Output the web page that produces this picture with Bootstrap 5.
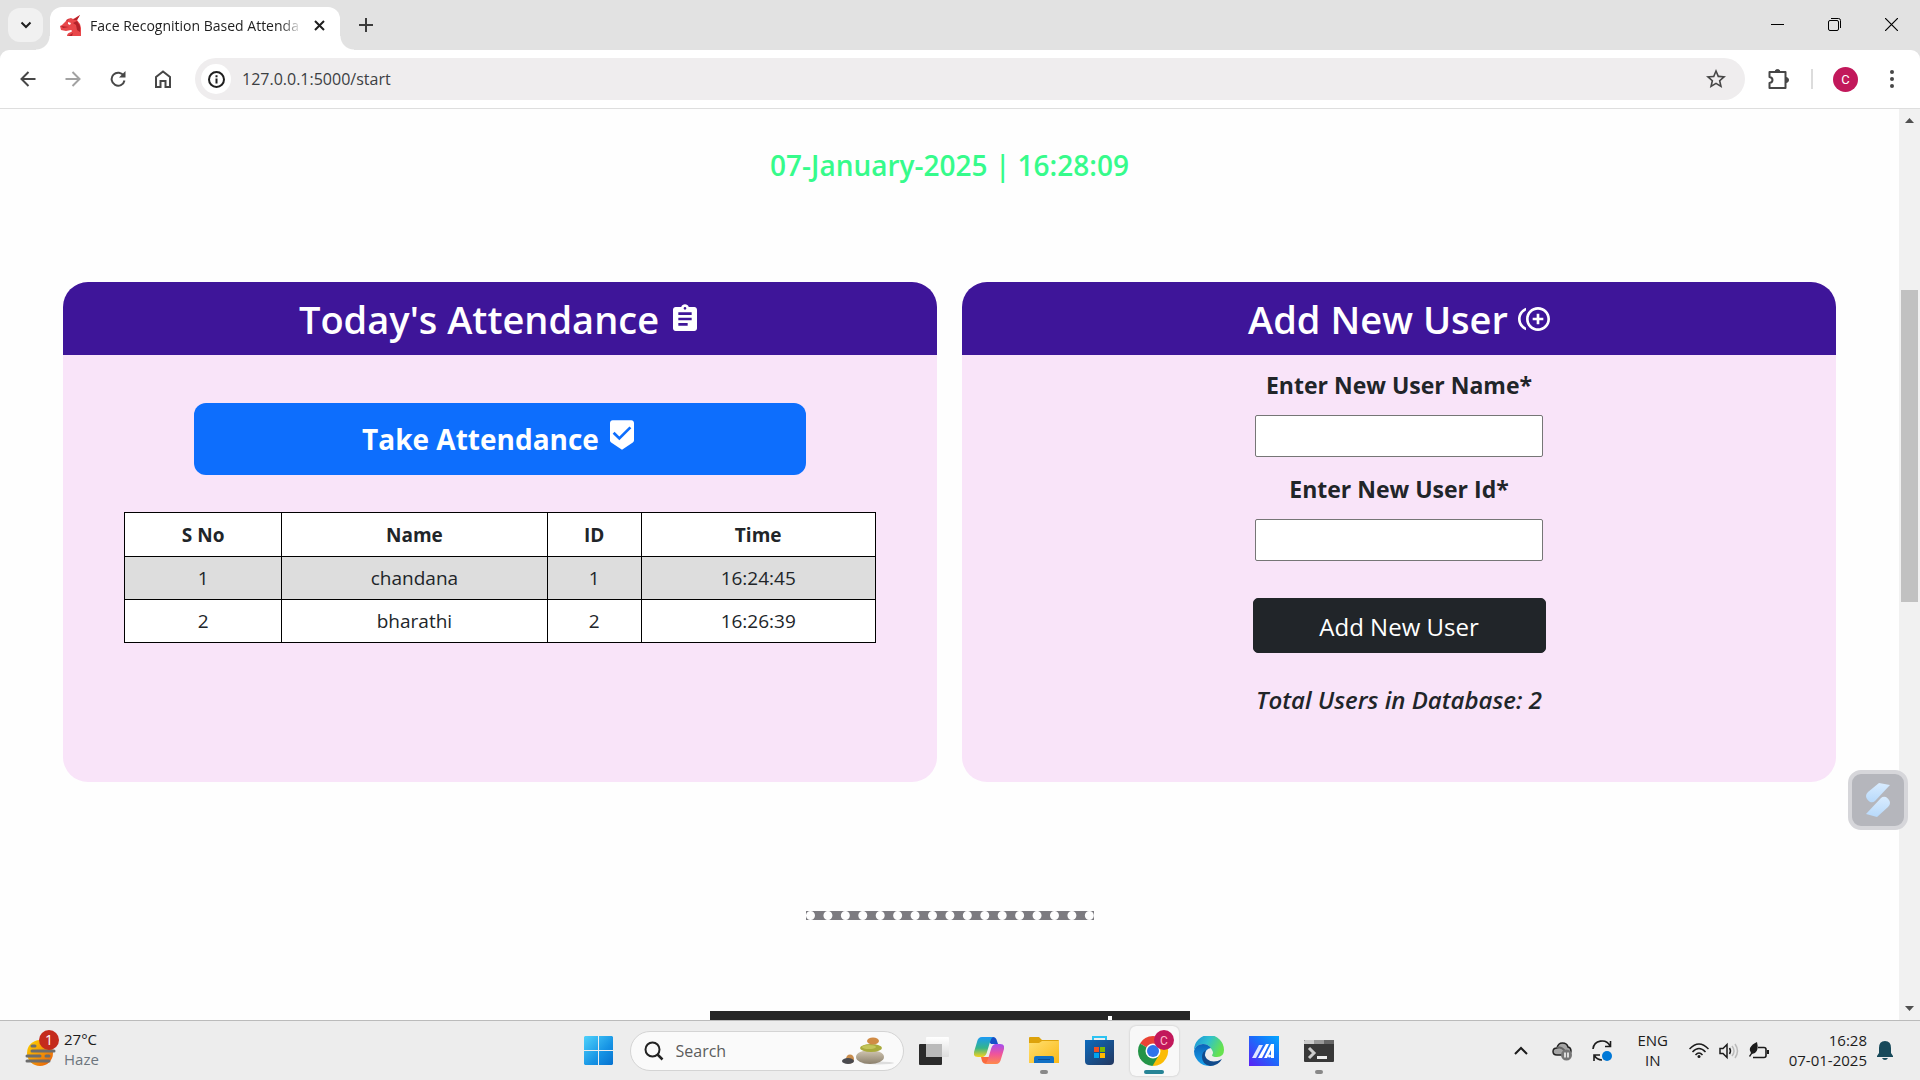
<!DOCTYPE html>
<html lang="en">
<head>
<meta charset="utf-8">
<meta name="viewport" content="width=device-width, initial-scale=1">
<title>Face Recognition Based Attendance System</title>
<link rel="stylesheet" href="https://cdn.jsdelivr.net/npm/bootstrap@5.3.0/dist/css/bootstrap.min.css">
<style>
  body { font-family: "Open Sans", "Noto Sans", sans-serif; color: #212529; }
  button { padding: 0; border: 0; background: none; color: inherit; }
  svg { display: block; flex: none; }

  /* browser frame */
  .tab-strip { height: 50px; background: #e2e2e2; }
  .tab-search { width: 35px; height: 34px; margin: 8px 7px 8px 8px; border-radius: 12px; background: #f1f1f1; }
  .browser-tab { position: relative; width: 290px; height: 43px; padding: 0 15px 6px 10px; background: #fff; border-radius: 12px 12px 0 0; }
  .browser-tab::before, .browser-tab::after { content: ""; position: absolute; bottom: 0; width: 14px; height: 14px; }
  .browser-tab::before { left: -14px; background: radial-gradient(circle at 0 0, transparent 13px, #fff 14px); }
  .browser-tab::after { right: -14px; background: radial-gradient(circle at 100% 0, transparent 13px, #fff 14px); }
  .tab-title { width: 212px; margin-left: 9px; font-size: 14px; color: #1f1f1f; -webkit-mask-image: linear-gradient(90deg, #000 90%, transparent); mask-image: linear-gradient(90deg, #000 90%, transparent); }
  .new-tab { width: 51px; height: 50px; }
  .window-key { width: 57px; height: 48px; }
  .strip-base { background: #e2e2e2; }
  .toolbar { height: 59px; border-bottom: 1px solid #dedede; border-radius: 9px 9px 0 0; background: #fff; padding: 8px 10px 8px 5px; }
  .tool-key { width: 45px; height: 42px; color: #474747; }
  .address { height: 42px; border-radius: 21px; background: #efedee; padding: 0 18px 0 6px; margin-left: 10px; }
  .site-info { width: 30px; height: 30px; border-radius: 50%; background: #fff; color: #1f1f1f; }
  .address input { border: 0; background: none; outline: 0; padding: 0; margin-left: 11px; font-size: 16px; color: #3c4043; }
  .puzzle { margin: 0 22px 0 23px; }
  .tool-rule { width: 2px; height: 20px; background: #dcdcdc; }
  .avatar { width: 25px; height: 25px; margin: 0 32px 0 20px; border-radius: 50%; background: #c2185b; color: #fff; font: 13px Roboto, sans-serif; }
  .more { margin-right: 16px; }

  /* attendance page */
  .page-area { background: #fefefe; }
  .clock-line { font-size: 28px; line-height: 34px; font-weight: 600; color: #36fb8b; padding-top: 39px; margin: 0 0 100px; }
  .panels { display: flex; gap: 25px; padding: 0 63px; }
  .panel { flex: 1 1 0; min-height: 500px; border-radius: 25px; background: #f9e4f9; overflow: hidden; }
  .panel-title { height: 73px; gap: 10px; margin: 0; padding-top: 3px; background: #3e1599; color: #fff; font-size: 38px; font-weight: 600; }
  .panel-title svg { margin-bottom: 2px; }
  .take-btn { width: 70%; height: 72px; gap: 7px; margin-top: 48px; border-radius: 12px; font-size: 28px; font-weight: 700; }
  .take-btn svg { margin-bottom: 8px; }
  .log { width: 86%; margin: 37px auto 0; border-collapse: collapse; table-layout: fixed; background: #fff; font-size: 19px; line-height: 26px; }
  .log th, .log td { border: 1px solid #000; padding: 9px 8px 8px; text-align: center; }
  .log th { font-weight: 700; }
  .log td { line-height: 25px; }
  .log tbody tr:nth-child(odd) { background: #ddd; }
  .user-form { padding-top: 12px; }
  .user-form label { font-size: 23px; line-height: 36px; font-weight: 700; margin-bottom: 12px; }
  .user-form input { width: 288px; height: 42px; border: 1px solid #767676; border-radius: 2px; margin-bottom: 14px; background: #fff; }
  .add-btn { width: 293px; height: 55px; margin-top: 23px; padding-top: 8px; border-radius: 5px; font-size: 24px; }
  .total { font-size: 24px; line-height: 36px; font-weight: 600; font-style: italic; margin: 29px 0 0; }
  .beads { width: 288px; height: 9px; margin: 129px auto 91px; border: 0; border-top: 9px dotted #fefefe; background: #7c7b80; opacity: 1; }
  .footer-block { width: 480px; height: 60px; background: #262626; padding: 5px 78px; }
  .footer-block i { width: 4px; height: 40px; background: #fff; }
  .scroll-rail { width: 21px; background: #f1f1f1; padding: 7px 2px 4px; }
  .scroll-rail .thumb { height: 312px; background: #c1c1c1; margin-top: 164px; }
  .helper { position: fixed; right: 12px; bottom: 250px; width: 60px; height: 60px; border: 4px solid #d6d6da; border-radius: 13px; background: #b5b6bc; }

  /* taskbar */
  .taskbar { height: 60px; background: #ededed; border-top: 1px solid #bbb; font-size: 15px; line-height: 20px; color: #1c1c1c; }
  .side { flex: 1 1 0; }
  .weather { padding-left: 24px; gap: 3px; padding-bottom: 4px; }
  .task-key { position: relative; width: 55px; height: 59px; }
  .task-key .plate { width: 49px; height: 50px; border-radius: 6px; background: #f8f8f8; box-shadow: 0 0 2px #bbb; }
  .task-key.open::after { content: ""; position: absolute; left: 50%; bottom: 6px; width: 8px; height: 4px; margin-left: -4px; border-radius: 2px; background: #888; }
  .task-key.live::after { width: 20px; margin-left: -10px; background: #268496; }
  .seek { width: 274px; height: 40px; margin: 0 3px 0 4px; border: 1px solid #d4d4d4; border-radius: 20px; background: #fafafa; padding: 0 9px 0 13px; }
  .seek input { min-width: 0; border: 0; outline: 0; background: none; padding: 0; margin-left: 12px; font-size: 16px; color: #555; }
  .seek input::placeholder { color: #5c5c5c; opacity: 1; }
  .tray { padding-right: 27px; }
  .tray .words { padding-bottom: 2px; }
  .tray .lang { margin: 0 21px 0 5px; }
  .tray .date { width: 80px; margin: 0 10px 0 18px; }
</style>
</head>
<body class="vh-100 d-flex flex-column overflow-hidden">

<header>
  <div class="tab-strip d-flex align-items-end">
    <button class="tab-search d-flex align-items-center justify-content-center" aria-label="Search tabs">
      <svg width="12" height="8" viewBox="0 0 12 8" fill="none" stroke="#1f1f1f" stroke-width="2"><path d="M1.500 1.500L6 6l4.500-4.500"/></svg>
    </button>
    <div class="browser-tab d-flex align-items-center">
      <svg width="21" height="21" viewBox="0 0 21 21"><path fill="#e8474a" d="M0 11l2-1 4-4q2-3 5-3l2 1 2-1 5-3-3 5 3 4 1 4v8H7q0-3 4-4 2-1 0-2l-5 1-5-1z"/><path fill="#b3222a" d="M13 5l7-5-3 5zM1 11l8 1-6 1zM13 8l3 2 1 5 3 2v-6l-3-5zM8 21l5-3-1 3zM6 5l3-1-2 2z"/><path fill="#fff" d="M8 7l3 1-1 2-2-1z"/></svg>
      <span class="tab-title text-nowrap">Face Recognition Based Attenda</span>
      <button class="ms-auto" aria-label="Close tab"><svg width="11" height="11" viewBox="0 0 11 11" stroke="#1f1f1f" stroke-width="2"><path d="M1 1l9 9M10 1l-9 9"/></svg></button>
    </div>
    <button class="new-tab d-flex align-items-center justify-content-center" aria-label="New tab">
      <svg width="14" height="14" viewBox="0 0 14 14" stroke="#3c3c3c" stroke-width="2"><path d="M7 0v14M0 7h14"/></svg>
    </button>
    <div class="ms-auto d-flex align-self-start">
      <button class="window-key d-flex align-items-center justify-content-center" aria-label="Minimize"><svg width="13" height="13" viewBox="0 0 13 13" stroke="#000"><path d="M0 6.500h13"/></svg></button>
      <button class="window-key d-flex align-items-center justify-content-center" aria-label="Restore"><svg width="13" height="13" viewBox="0 0 13 13" stroke="#000" fill="none"><rect x=".5" y="2.500" width="10" height="10" rx="1.500"/><path d="M3 .5h7.500q2 0 2 2V10"/></svg></button>
      <button class="window-key d-flex align-items-center justify-content-center" aria-label="Close"><svg width="13" height="13" viewBox="0 0 13 13" stroke="#000" stroke-width="1.200"><path d="M0 0l13 13M13 0L0 13"/></svg></button>
    </div>
  </div>
  <div class="strip-base">
  <div class="toolbar d-flex align-items-center">
    <button class="tool-key d-flex align-items-center justify-content-center" aria-label="Back"><svg width="16" height="16" viewBox="0 0 16 16" fill="none" stroke="currentColor" stroke-width="2"><path d="M15.500 8H2M8.500 1L1.500 8l7 7"/></svg></button>
    <button class="tool-key d-flex align-items-center justify-content-center opacity-50" aria-label="Forward"><svg width="16" height="16" viewBox="0 0 16 16" fill="none" stroke="currentColor" stroke-width="2"><path d="M.5 8H14M7.500 1l7 7-7 7"/></svg></button>
    <button class="tool-key d-flex align-items-center justify-content-center" aria-label="Reload"><svg width="16" height="16" viewBox="0 0 16 16"><path d="M13.800 5A6.500 6.500 0 1 0 14.500 9.500" fill="none" stroke="currentColor" stroke-width="2"/><path d="M15.500 0v6.500H9z" fill="currentColor"/></svg></button>
    <button class="tool-key d-flex align-items-center justify-content-center" aria-label="Home"><svg width="16" height="18" viewBox="0 0 16 18" fill="none" stroke="currentColor" stroke-width="2"><path d="M1 7l7-5.500L15 7v10h-4.500v-6h-5v6H1z"/></svg></button>
    <div class="address d-flex align-items-center flex-grow-1">
      <button class="site-info d-flex align-items-center justify-content-center" aria-label="Site information"><svg width="17" height="17" viewBox="0 0 17 17" fill="none" stroke="currentColor" stroke-width="2"><circle cx="8.500" cy="8.500" r="7.500"/><path d="M8.500 7.500v5M8.500 4.300v2"/></svg></button>
      <input class="flex-grow-1" type="text" value="127.0.0.1:5000/start" aria-label="Address">
      <button aria-label="Bookmark this page"><svg width="22" height="22" viewBox="1 1 22 22" fill="#474747"><path d="M22 9.240l-7.190-.62L12 2 9.190 8.630 2 9.240l5.460 4.730L5.820 21 12 17.270 18.180 21l-1.630-7.030L22 9.240zM12 15.400l-3.760 2.270 1-4.280-3.320-2.880 4.380-.38L12 6.100l1.710 4.040 4.380.38-3.320 2.880 1 4.280L12 15.400z"/></svg></button>
    </div>
    <button class="puzzle" aria-label="Extensions"><svg width="21" height="20" viewBox="0 0 21 20"><path d="M1.500 3h16v16h-16v-5q3-.5 3-3t-3-3z" fill="none" stroke="#474747" stroke-width="2" stroke-linejoin="round"/><path d="M7 3a2.500 2.500 0 0 1 5 0zM18 8.500a2.500 2.500 0 0 1 0 5z" fill="#474747" stroke="#474747"/></svg></button>
    <span class="tool-rule"></span>
    <button class="avatar d-flex align-items-center justify-content-center" aria-label="Profile">C</button>
    <button class="more" aria-label="Menu"><svg width="4" height="18" viewBox="0 0 4 18" fill="#474747"><circle cx="2" cy="2" r="2"/><circle cx="2" cy="9" r="2"/><circle cx="2" cy="16" r="2"/></svg></button>
  </div>
  </div>
</header>

<div class="d-flex flex-grow-1 overflow-hidden page-area">
  <main class="flex-grow-1 text-center overflow-hidden">
    <h3 class="clock-line">07-January-2025 | 16:28:09</h3>

    <div class="panels">
      <section class="panel">
        <h2 class="panel-title d-flex align-items-center justify-content-center">Today's Attendance
          <svg width="32" height="32" viewBox="0 0 24 24" fill="#fff"><path d="M19 3h-4.180C14.400 1.840 13.300 1 12 1c-1.300 0-2.400.84-2.820 2H5c-1.100 0-2 .9-2 2v14c0 1.100.9 2 2 2h14c1.100 0 2-.9 2-2V5c0-1.100-.9-2-2-2zm-7 0c.55 0 1 .45 1 1s-.45 1-1 1-1-.45-1-1 .45-1 1-1zm2 14H7v-2h7v2zm3-4H7v-2h10v2zm0-4H7V7h10v2z"/></svg>
        </h2>
        <button class="take-btn btn btn-primary d-inline-flex align-items-center justify-content-center border-0">Take Attendance
          <svg width="32" height="32" viewBox="0 0 24 24" fill="#fff"><path d="M19 1H5c-1.100 0-1.990.9-1.990 2L3 15.930c0 .69.35 1.300.88 1.660L12 23l8.110-5.410c.53-.36.88-.97.88-1.660L21 3c0-1.100-.9-2-2-2zm-9 15l-5-5 1.410-1.410L10 13.170l7.590-7.590L19 7l-9 9z"/></svg>
        </button>
        <table class="log">
          <colgroup><col style="width:20.900%"><col style="width:35.400%"><col style="width:12.500%"><col style="width:31.200%"></colgroup>
          <thead><tr><th>S No</th><th>Name</th><th>ID</th><th>Time</th></tr></thead>
          <tbody>
            <tr><td>1</td><td>chandana</td><td>1</td><td>16:24:45</td></tr>
            <tr><td>2</td><td>bharathi</td><td>2</td><td>16:26:39</td></tr>
          </tbody>
        </table>
      </section>

      <section class="panel">
        <h2 class="panel-title d-flex align-items-center justify-content-center">Add New User
          <svg width="32" height="32" viewBox="0 0 24 24" fill="#fff"><path d="M16 8h-2v3h-3v2h3v3h2v-3h3v-2h-3zM2 12c0-2.790 1.640-5.200 4.010-6.320V3.520C2.520 4.760 0 8.090 0 12s2.520 7.240 6.010 8.480v-2.160C3.640 17.200 2 14.790 2 12zm13-9c-4.960 0-9 4.040-9 9s4.040 9 9 9 9-4.040 9-9-4.040-9-9-9zm0 16c-3.860 0-7-3.140-7-7s3.140-7 7-7 7 3.140 7 7-3.140 7-7 7z"/></svg>
        </h2>
        <form class="user-form d-flex flex-column align-items-center">
          <label for="newusername">Enter New User Name*</label>
          <input type="text" id="newusername">
          <label for="newuserid">Enter New User Id*</label>
          <input type="text" id="newuserid">
          <button type="button" class="add-btn btn btn-dark">Add New User</button>
          <h5 class="total">Total Users in Database: 2</h5>
        </form>
      </section>
    </div>

    <hr class="beads">
    <div class="footer-block mx-auto d-flex justify-content-end"><i></i></div>
  </main>

  <div class="scroll-rail d-flex flex-column">
    <svg width="17" height="10" viewBox="0 0 17 10" fill="#505050"><path d="M4 7l4.500-5L13 7z"/></svg>
    <div class="thumb"></div>
    <svg class="mt-auto" width="17" height="12" viewBox="0 0 17 12" fill="#505050"><path d="M4 2h9L8.500 7z"/></svg>
  </div>
</div>

<button class="helper d-flex align-items-center justify-content-center" aria-label="Open assistant">
  <svg width="26" height="34" viewBox="0 0 26 34"><defs><linearGradient id="ribbon" x1="0" y1="0" x2="0" y2="1"><stop offset="0" stop-color="#d9ecff"/><stop offset="1" stop-color="#b7d9fb"/></linearGradient></defs><path fill="url(#ribbon)" d="M14 0l11 2L10 18q-2 2-5 1-4-3-4-6 0-2 2-4z"/><path fill="url(#ribbon)" d="M12 34L1 31l15-16q2-2 5-1 4 3 4 6 0 2-2 4z"/></svg>
</button>

<footer class="taskbar d-flex align-items-center">
  <div class="side weather d-flex align-items-center">
    <svg width="37" height="40" viewBox="0 0 37 40">
      <defs><linearGradient id="sun" x1="0" y1="0" x2="1" y2="1"><stop offset="0" stop-color="#ffd500"/><stop offset="1" stop-color="#e8590c"/></linearGradient></defs>
      <circle cx="16" cy="24" r="13" fill="url(#sun)"/>
      <path d="M8 17h3M8 22h22M3 27h13M22 27h3M3 32h22" stroke="#6d6d6d" stroke-width="3" stroke-linecap="round"/>
      <circle cx="25" cy="11" r="10" fill="#c42b1c"/><text x="25" y="16" font-size="14" text-anchor="middle" fill="#fff">1</text>
    </svg>
    <div><div>27°C</div><div class="text-secondary">Haze</div></div>
  </div>

  <button class="task-key d-flex align-items-center justify-content-center" aria-label="Start">
    <svg width="29" height="29" viewBox="0 0 29 29"><defs><linearGradient id="win" x1="0" y1="0" x2="1" y2="1"><stop offset="0" stop-color="#4fd2fb"/><stop offset=".6" stop-color="#1693e4"/><stop offset="1" stop-color="#0671cf"/></linearGradient></defs><path fill="url(#win)" d="M1 0h13v14H0V1zM15 0h13l1 1v13H15zM0 15h14v14H1l-1-1zM15 15h14v13l-1 1H15z"/></svg>
  </button>
  <div class="seek d-flex align-items-center">
    <svg width="20" height="20" viewBox="0 0 20 20" fill="none" stroke="#222" stroke-width="2"><circle cx="8.500" cy="8.500" r="7"/><path d="M13.500 13.500l5 5" stroke-width="2.500"/></svg>
    <input class="flex-grow-1" type="text" placeholder="Search" aria-label="Search">
    <svg width="52" height="28" viewBox="0 0 52 28">
      <defs><linearGradient id="stone" x1="0" y1="0" x2="0" y2="1"><stop offset="0" stop-color="#d3c8b4"/><stop offset="1" stop-color="#8b806c"/></linearGradient></defs>
      <ellipse cx="36" cy="26" rx="16" ry="1.500" fill="#ddd"/>
      <ellipse cx="8" cy="22" rx="4" ry="4.500" fill="#c98d4d"/><ellipse cx="6" cy="24" rx="6" ry="3" fill="#4a4a4e"/>
      <ellipse cx="28" cy="20" rx="14" ry="7" fill="url(#stone)"/><ellipse cx="29" cy="11" rx="11" ry="4" fill="#a9ab3c"/><ellipse cx="27" cy="10" rx="7" ry="2" fill="#c3c55a"/><ellipse cx="31" cy="4" rx="6" ry="3.500" fill="#d08b45"/>
    </svg>
  </div>
  <button class="task-key d-flex align-items-center justify-content-center" aria-label="Task view">
    <svg width="30" height="28" viewBox="0 0 30 28"><defs><linearGradient id="pane" x1="0" y1="0" x2="0" y2="1"><stop offset="0" stop-color="#fff"/><stop offset="1" stop-color="#ddd"/></linearGradient></defs><rect y="7" width="23" height="21" rx="1" fill="#2b2b2b"/><rect x="7" width="23" height="20" rx="1" fill="url(#pane)"/><rect x="7" y="7" width="16" height="13" fill="#bababa"/></svg>
  </button>
  <button class="task-key d-flex align-items-center justify-content-center" aria-label="Copilot">
    <svg width="30" height="28" viewBox="0 0 30 28">
      <defs><linearGradient id="cpa" x1="0" y1="0" x2="0" y2="1"><stop offset="0" stop-color="#1b9af5"/><stop offset=".55" stop-color="#35b58a"/><stop offset="1" stop-color="#f8d21c"/></linearGradient><linearGradient id="cpb" x1="0" y1="0" x2="0" y2="1"><stop offset="0" stop-color="#a34df0"/><stop offset=".5" stop-color="#f0549b"/><stop offset="1" stop-color="#ff8a4a"/></linearGradient></defs>
      <path fill="#1450c8" d="M11 0h8q3 0 4 4l1 3h-7z"/>
      <path fill="#fa6a3d" d="M7 20h10l-4 7q-4 0-5-3z"/>
      <path fill="url(#cpa)" d="M8 0h11q-2 1-3 5l-3 10q-1 4-4 5H4q-5 0-4-5L3 5q1-5 5-5z"/>
      <path fill="url(#cpb)" d="M22 27H11q2-1 3-5l3-10q1-4 4-5h5q5 0 4 5l-3 10q-1 5-5 5z"/>
    </svg>
  </button>
  <button class="task-key open d-flex align-items-center justify-content-center" aria-label="File Explorer">
    <svg width="30" height="27" viewBox="0 0 30 27"><defs><linearGradient id="fold" x1="0" y1="0" x2="1" y2="1"><stop offset="0" stop-color="#ffdf70"/><stop offset="1" stop-color="#fbb917"/></linearGradient></defs><path fill="#dda20b" d="M0 1q0-1 1-1h9l3 3h16q1 0 1 1v4H0z"/><path fill="url(#fold)" d="M0 6h10l3-2h17v22H0z"/><path fill="#1270c4" d="M5 26v-5q0-2 2-2h16q2 0 2 2v5z"/><path stroke="#0c4f94" d="M9 22.500h12"/></svg>
  </button>
  <button class="task-key d-flex align-items-center justify-content-center" aria-label="Microsoft Store">
    <svg width="29" height="29" viewBox="0 0 29 29"><defs><linearGradient id="bag" x1="0" y1="0" x2="1" y2="1"><stop offset="0" stop-color="#0d6bbd"/><stop offset="1" stop-color="#23375f"/></linearGradient></defs><path d="M8 6V1h13v5" fill="none" stroke="#2cc3f2" stroke-width="2"/><path fill="url(#bag)" d="M0 4h29v21q0 4-4 4H4q-4 0-4-4z"/><path fill="#f25022" d="M9 11h5v5H9z"/><path fill="#7fba00" d="M15 11h5v5h-5z"/><path fill="#00a4ef" d="M9 17h5v5H9z"/><path fill="#ffb900" d="M15 17h5v5h-5z"/></svg>
  </button>
  <button class="task-key open live d-flex align-items-center justify-content-center" aria-label="Chrome">
    <span class="plate d-flex align-items-center justify-content-center">
    <svg width="40" height="44" viewBox="-1 0 40 44">
      <path fill="#ea4335" d="M18 22L5 14.500A15 15 0 0 1 31 14.500z"/><path fill="#fbbc05" d="M18 22V15l13-.5A15 15 0 0 1 18 37z"/>
      <path fill="#249447" d="M18 22l6 4-6.500 11A15 15 0 0 1 5 14.500z"/>
      <circle cx="18" cy="22" r="7.500" fill="#fff"/><circle cx="18" cy="22" r="6" fill="#2f73ea"/>
      <circle cx="29" cy="11" r="10" fill="#c2185b"/><text x="29" y="15.500" text-anchor="middle" font-family="Roboto, sans-serif" font-size="12" fill="#fbc">C</text>
    </svg></span>
  </button>
  <button class="task-key d-flex align-items-center justify-content-center" aria-label="Edge">
    <svg width="30" height="30" viewBox="0 0 30 30">
      <defs><linearGradient id="ea" x1="0" y1="0" x2="1" y2=".4"><stop offset="0" stop-color="#1a8fd8"/><stop offset=".5" stop-color="#2fc0cf"/><stop offset="1" stop-color="#66e24f"/></linearGradient><linearGradient id="eb" x1="0" y1="0" x2="0" y2="1"><stop offset="0" stop-color="#0a63b8"/><stop offset="1" stop-color="#1aa3ee"/></linearGradient></defs>
      <path fill="url(#ea)" d="M0 14A15 15 0 0 1 30 14q0 7-7 7-5 0-5-2 2-2 0-5-3-6-9-6Q3 8 0 14z"/>
      <path fill="url(#eb)" d="M0 15Q2 8 9 8q5 0 8 4-6 1-6 7 0 7 9 10A15 15 0 0 1 0 15z"/>
      <path fill="#114a8b" d="M12 14q-3 5 1 9 6 5 15 0-4 7-12 7-8-2-8-9 0-5 4-7z"/>
    </svg>
  </button>
  <button class="task-key d-flex align-items-center justify-content-center" aria-label="MyASUS">
    <svg width="30" height="30" viewBox="0 0 30 30"><defs><linearGradient id="asus" x1="0" y1="1" x2="1" y2="0"><stop offset="0" stop-color="#5a20f5"/><stop offset=".6" stop-color="#1673fb"/><stop offset="1" stop-color="#04a8ff"/></linearGradient></defs><path fill="url(#asus)" d="M0 0h30v30H0z"/><path fill="#dfe6ff" d="M3 22L10 9h4L7 22z"/><path fill="#fff" d="M9 22L17 8h3l-7 14zM15 22l7-14h3v14h-3v-8l-4 8z"/><circle cx="20.500" cy="20" r="1.500" fill="#fff"/></svg>
  </button>
  <button class="task-key open d-flex align-items-center justify-content-center" aria-label="Terminal">
    <svg width="30" height="22" viewBox="0 0 30 22"><rect width="30" height="22" rx="1" fill="#383838"/><path fill="#ccc" d="M1 0h9v4H0V1z"/><path fill="#999" d="M10 0h10v4H10z"/><path fill="#666" d="M20 0h9l1 1v3H20z"/><path d="M5 8l5 5-5 5" fill="none" stroke="#ccc" stroke-width="3"/><path d="M13 17.500h10" stroke="#eee" stroke-width="3"/></svg>
  </button>

  <div class="side tray d-flex align-items-center justify-content-end text-center">
    <button class="me-4" aria-label="Show hidden icons"><svg width="14" height="9" viewBox="0 0 14 9" fill="none" stroke="#1c1c1c" stroke-width="2"><path d="M1 8l6-6 6 6"/></svg></button>
    <svg width="20" height="20" viewBox="0 0 20 20"><path d="M5 14q-4 0-4-3.500T5 7q1-5 5.500-5T16 6q3 .5 3 4t-4 4z" fill="#a5a5a5" stroke="#222" stroke-width="1.500"/><path d="M5 7q4-2 8 3" stroke="#666" fill="none" stroke-width="2"/><circle cx="14.500" cy="14" r="5.500" fill="#777"/><path d="M13 11.500v5M16 11.500v5" stroke="#fff" stroke-width="1.500"/></svg>
    <svg class="mx-3" width="28" height="22" viewBox="-4 0 28 22" fill="none" stroke="#1c1c1c" stroke-width="1.600"><path d="M1 9a9 9 0 0 1 17-3M18.500 1v5.500H13M2 21v-6h6M2 15q3 5 8 5"/><circle cx="15" cy="16" r="5" fill="#0078d7" stroke="none"/></svg>
    <div class="words lang">ENG<br>IN</div>
    <svg width="20" height="16" viewBox="0 0 20 16" fill="none" stroke="#1c1c1c" stroke-width="1.500"><path d="M.5 6q9.500-10 19 0M3.500 9q6.500-7 13 0M6.500 12q3.500-4 7 0"/><circle cx="10" cy="13.500" r="1.500" fill="#1c1c1c" stroke="none"/></svg>
    <svg class="mx-2" width="24" height="18" viewBox="-2 0 24 18" fill="none" stroke="#1c1c1c" stroke-width="1.500"><path d="M1 6.500h3l4-4v13l-4-4H1z"/><path d="M10.500 6q2 3 0 6"/><path d="M13 4q4 5 0 10M16 2q5 7 0 14" stroke="#bbb"/></svg>
    <svg width="20" height="18" viewBox="0 0 20 18"><path d="M4 15.500h11q2 0 2-2v-6q0-2-2-2H9" fill="none" stroke="#1c1c1c" stroke-width="1.600"/><path fill="#1c1c1c" d="M18 8h2v4h-2zM1 6q2-4 7-6 2 8-2 11l-3 1-2 3-1-1 2-3q-2-3-1-5z"/></svg>
    <div class="words date text-end">16:28<br>07-01-2025</div>
    <svg width="16" height="20" viewBox="0 0 16 20" fill="#17495a"><path d="M8 0q6 0 6 7v5l2 3v1H0v-1l2-3V7q0-7 6-7zM5 17h6q-1 2-3 2t-3-2z"/></svg>
  </div>
</footer>

<script src="https://cdn.jsdelivr.net/npm/bootstrap@5.3.0/dist/js/bootstrap.bundle.min.js"></script>
</body>
</html>
